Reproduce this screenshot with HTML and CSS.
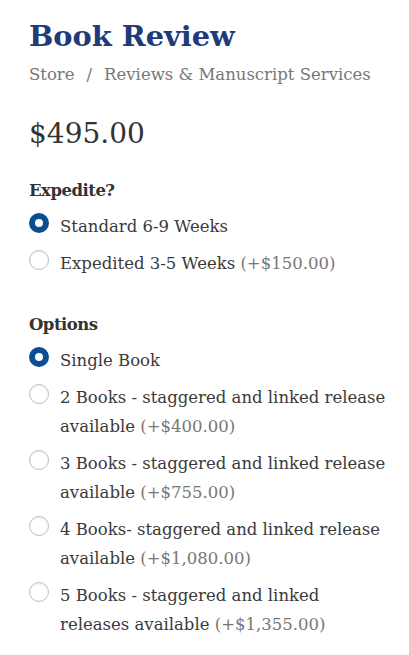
FILE: index.html
```html
<!DOCTYPE html>
<html>
<head>
<meta charset="utf-8">
<link rel="stylesheet" href="styles.css">
</head>
<body>
<div class="product">
  <h1 class="title">Book Review</h1>
  <nav class="crumbs"><span>Store</span><span class="sep">/</span><span>Reviews &amp; Manuscript Services</span></nav>
  <div class="price">$495.00</div>

  <div class="group">
    <div class="group-label">Expedite?</div>
    <label class="opt"><span class="radio checked"></span><span class="txt">Standard 6-9 Weeks</span></label>
    <label class="opt"><span class="radio"></span><span class="txt">Expedited 3-5 Weeks <span class="extra">(+$150.00)</span></span></label>
  </div>

  <div class="group">
    <div class="group-label">Options</div>
    <label class="opt"><span class="radio checked"></span><span class="txt">Single Book</span></label>
    <label class="opt"><span class="radio"></span><span class="txt">2 Books - staggered and linked release available <span class="extra">(+$400.00)</span></span></label>
    <label class="opt"><span class="radio"></span><span class="txt">3 Books - staggered and linked release available <span class="extra">(+$755.00)</span></span></label>
    <label class="opt"><span class="radio"></span><span class="txt">4 Books- staggered and linked release available <span class="extra">(+$1,080.00)</span></span></label>
    <label class="opt"><span class="radio"></span><span class="txt">5 Books - staggered and linked releases available <span class="extra">(+$1,355.00)</span></span></label>
  </div>
</div>
</body>
</html>
```
FILE: styles.css
```css
html, body { margin: 0; padding: 0; background: #fff; }
body { font-family: "DejaVu Serif", Georgia, serif; color: #3a3a3a; }
.product { padding: 18px 20px 0 29px; }
.title { margin: 0; font-size: 28.8px; line-height: 36px; color: #213a7a; font-weight: bold; }
.crumbs { margin-top: 9px; font-size: 16.5px; line-height: 24px; color: #777; }
.crumbs .sep { margin: 0 12px; }
.price { margin-top: 29px; font-size: 28px; line-height: 36px; color: #333; }
.group { margin-top: 27px; }
.group + .group { margin-top: 35px; }
.group-label { font-weight: bold; font-size: 16.5px; letter-spacing: -0.5px; line-height: 24px; color: #333; margin-bottom: 9px; }
.opt { display: flex; align-items: flex-start; gap: 11px; margin-bottom: 8px; font-size: 16.5px; line-height: 29px; color: #3a3a3a; }
.radio { flex: 0 0 20px; width: 20px; height: 20px; box-sizing: border-box; border-radius: 50%; border: 1px solid #b9bfc6; background: #fff; margin-top: 1px; box-shadow: inset 0 1px 2px rgba(0,0,0,0.08); }
.radio.checked { border: 6px solid #0b4f93; background: #fff; box-shadow: none; }
.extra { color: #777; }
```
